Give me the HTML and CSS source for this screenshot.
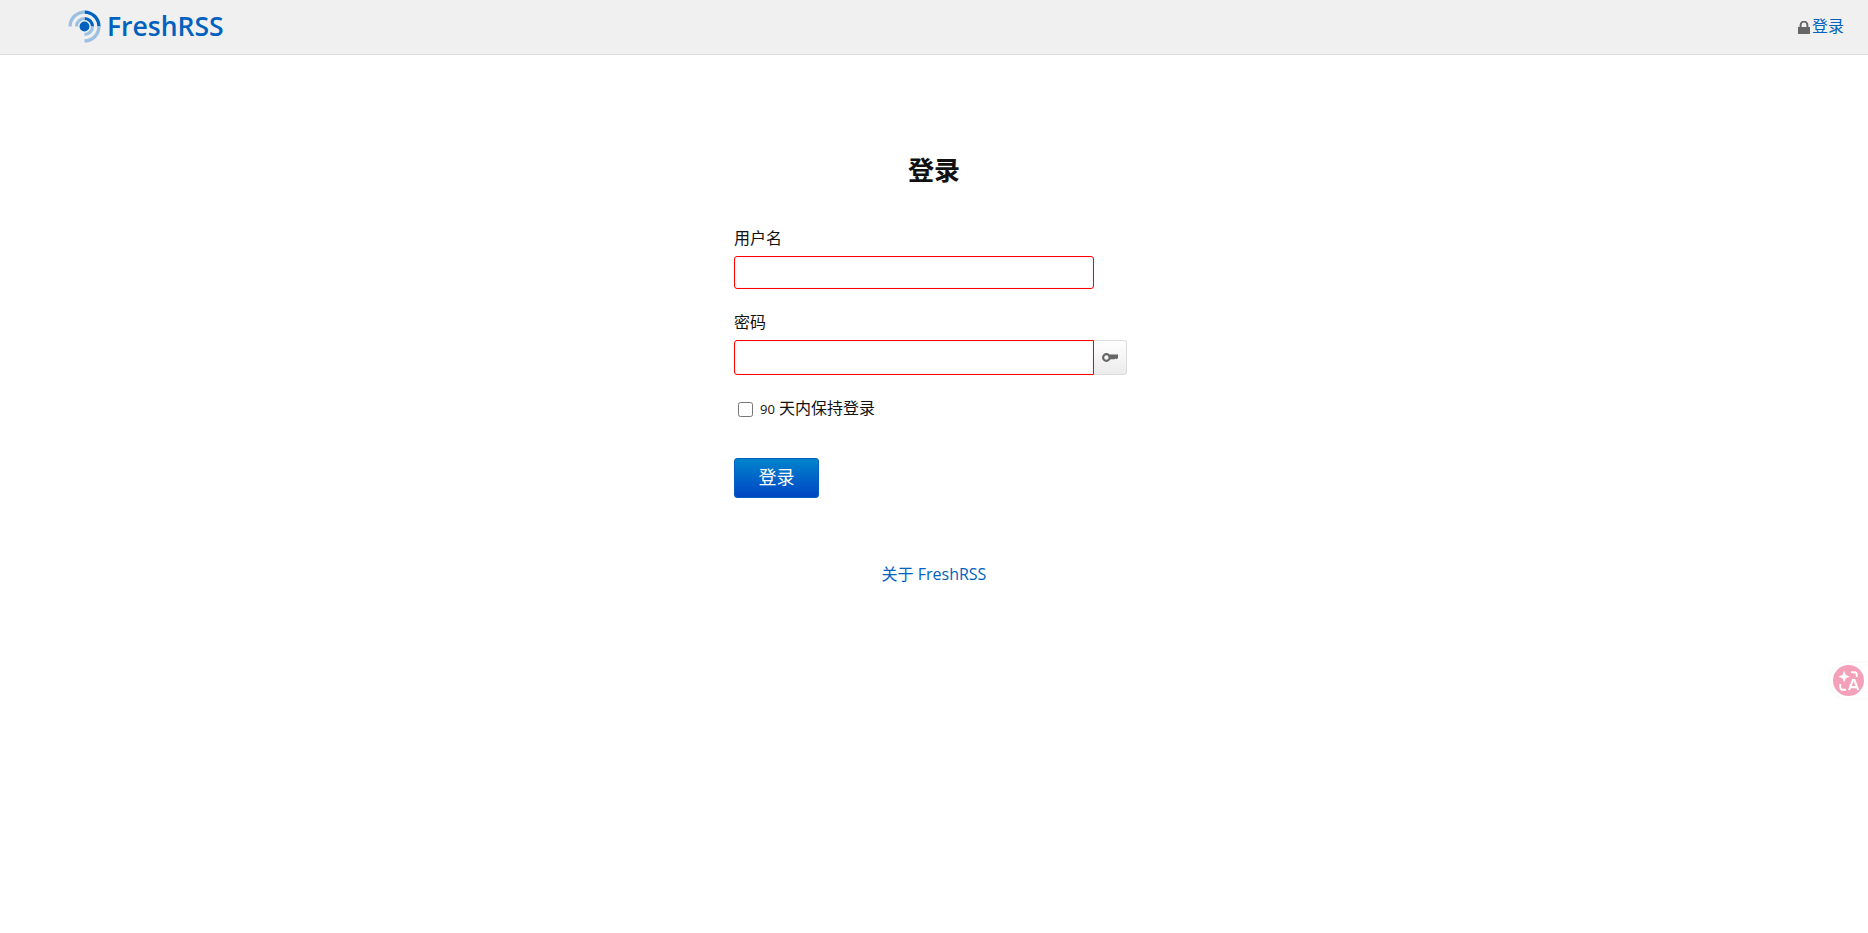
FILE: index.html
```html
<!DOCTYPE html>
<html lang="zh-CN">
<head>
<meta charset="utf-8">
<title>登录 · FreshRSS</title>
<link rel="stylesheet" href="styles.css">
</head>
<body>
<header class="header">
  <a class="brand" href="#">
    <svg class="brand-icon" viewBox="0 0 32 32" aria-hidden="true">
      <circle cx="16" cy="16" r="4.800" fill="#0062be"/>
      <path d="M16 8.200a7.800 7.800 0 0 1 7.800 7.800" fill="none" stroke="#0062be" stroke-width="3"/>
      <path d="M16 2A14 14 0 0 1 30 16" fill="none" stroke="#0062be" stroke-width="3.200"/>
      <path d="M8.200 16A7.800 7.800 0 0 1 16 8.200M23.800 16a7.800 7.800 0 0 1-7.800 7.800" fill="none" stroke="#9cc0e2" stroke-width="3"/>
      <path d="M2 16A14 14 0 0 1 16 2M30 16A14 14 0 0 1 16 30" fill="none" stroke="#9cc0e2" stroke-width="3.200"/>
    </svg>
    <span class="brand-name">FreshRSS</span>
  </a>
  <a class="signin" href="#">
    <svg class="lock" viewBox="0 0 12 13" aria-hidden="true">
      <path d="M0 6h12v7H0z" fill="#666"/>
      <path d="M2.600 6.500V4a3.400 3.400 0 0 1 6.800 0v2.500" fill="none" stroke="#666" stroke-width="2"/>
    </svg>
    <span>登录</span>
  </a>
</header>

<main class="main">
  <h1 class="title">登录</h1>
  <form class="form">
    <div class="field">
      <label class="label" for="username">用户名</label>
      <input class="input" id="username" type="text" required>
    </div>
    <div class="field">
      <label class="label" for="password">密码</label>
      <div class="group">
        <input class="input input-tall" id="password" type="password" required>
        <button class="reveal" type="button" aria-label="显示密码">
          <svg class="key" viewBox="0 0 16 9" aria-hidden="true">
            <circle cx="4.400" cy="4.500" r="3.300" fill="none" stroke="#666" stroke-width="2.200"/>
            <path d="M7 1.600h9v3.300l-1.500 1.300-1-0.700-1 0.700H7z" fill="#666"/>
          </svg>
        </button>
      </div>
    </div>
    <label class="keep">
      <input class="check" type="checkbox">
      <span class="keep-text"><span class="num">90</span> 天内保持登录</span>
    </label>
    <button class="submit" type="button">登录</button>
  </form>
  <a class="about" href="#">关于 FreshRSS</a>
</main>

<button class="translate" type="button" aria-label="翻译">
  <svg viewBox="0 0 32 32" aria-hidden="true">
    <circle cx="16" cy="16" r="16" fill="#f4a0b9"/>
    <path d="M11.500 6l1.700 4.300 4.300 1.700-4.300 1.700-1.700 4.300-1.700-4.300-4.300-1.700 4.300-1.700z" fill="#fff"/>
    <path d="M18.500 7.500h3.500a2.500 2.500 0 0 1 2.500 2.500v2.500M7.500 19.500V23a2.500 2.500 0 0 0 2.500 2.500h3.500" fill="none" stroke="#fff" stroke-width="2"/>
    <path d="M16.500 26l4-10.500h1.600l4 10.500M18 22.800h7" fill="none" stroke="#fff" stroke-width="2.200"/>
  </svg>
</button>
</body>
</html>
```

FILE: styles.css
```css
* {
  box-sizing: border-box;
}

html,
body {
  height: 100%;
}

body {
  margin: 0;
  background: #fff;
  color: #000;
  font-family: "Open Sans", "Noto Sans CJK SC", sans-serif;
  font-size: 16px;
  overflow: hidden;
}

a {
  color: #0062be;
  text-decoration: none;
}

.header {
  display: flex;
  align-items: center;
  justify-content: space-between;
  height: 55px;
  padding: 0 24px 2px 68px;
  background: #f0f0f0;
  border-bottom: 1px solid #dcdcdc;
}

.brand {
  display: flex;
  align-items: center;
  gap: 6px;
}

.brand-icon {
  width: 33px;
  height: 33px;
}

.brand-name {
  font-size: 26.5px;
  line-height: 33px;
  font-weight: 600;
}

.signin {
  display: flex;
  align-items: center;
  gap: 2px;
  line-height: 24px;
}

.lock {
  width: 12px;
  height: 13px;
  margin-top: 3px;
}

.main {
  display: flex;
  flex-direction: column;
  align-items: center;
  padding-top: 95px;
}

.title {
  margin: 0 0 36px;
  font-size: 26px;
  line-height: 40px;
  font-weight: 700;
  color: #111;
}

.form {
  display: flex;
  flex-direction: column;
  width: 400px;
}

.field {
  display: flex;
  flex-direction: column;
  margin-bottom: 21px;
}

.label {
  line-height: 24px;
  margin-bottom: 6px;
  color: #111;
}

.group {
  display: flex;
}

.input {
  display: block;
  width: 360px;
  height: 33px;
  padding: 5px;
  border: 1px solid #f00;
  border-radius: 3px;
  background: #fff;
  box-shadow: inset 0 0 2px #f8d8d8;
  outline: none;
  font: inherit;
}

.input-tall {
  height: 35px;
  border-radius: 3px 0 0 3px;
}

.reveal {
  display: flex;
  align-items: center;
  justify-content: center;
  width: 33px;
  height: 35px;
  padding: 0;
  border: 1px solid #ddd;
  border-left: 0;
  border-radius: 0 3px 3px 0;
  background: linear-gradient(#fff, #ebebeb);
}

.key {
  width: 16px;
  height: 9px;
}

.keep {
  display: flex;
  align-items: center;
  gap: 7px;
  height: 25px;
  margin: 0 0 0 4px;
  color: #111;
}

.keep-text {
  margin-bottom: 3px;
}

.check {
  width: 15px;
  height: 15px;
  margin: 1px 0 0;
}

.num {
  font-size: 13px;
}

.submit {
  width: 85px;
  height: 40px;
  margin-top: 37px;
  padding: 0 0 5px;
  border: 1px solid #0062be;
  border-radius: 3px;
  background: linear-gradient(#0084cc, #0045c4);
  color: #fff;
  font: inherit;
  font-size: 18px;
}

.about {
  margin-top: 64px;
  line-height: 24px;
}

.translate {
  position: absolute;
  top: 663px;
  right: 0;
  width: 38px;
  height: 35px;
  padding: 2px 4px 2px 3px;
  border: 0;
  border-radius: 18px 0 0 18px;
  background: #fff;
  box-shadow: 0 0 4px rgba(0, 0, 0, 0.05);
}

.translate svg {
  display: block;
  width: 31px;
  height: 31px;
}
```
